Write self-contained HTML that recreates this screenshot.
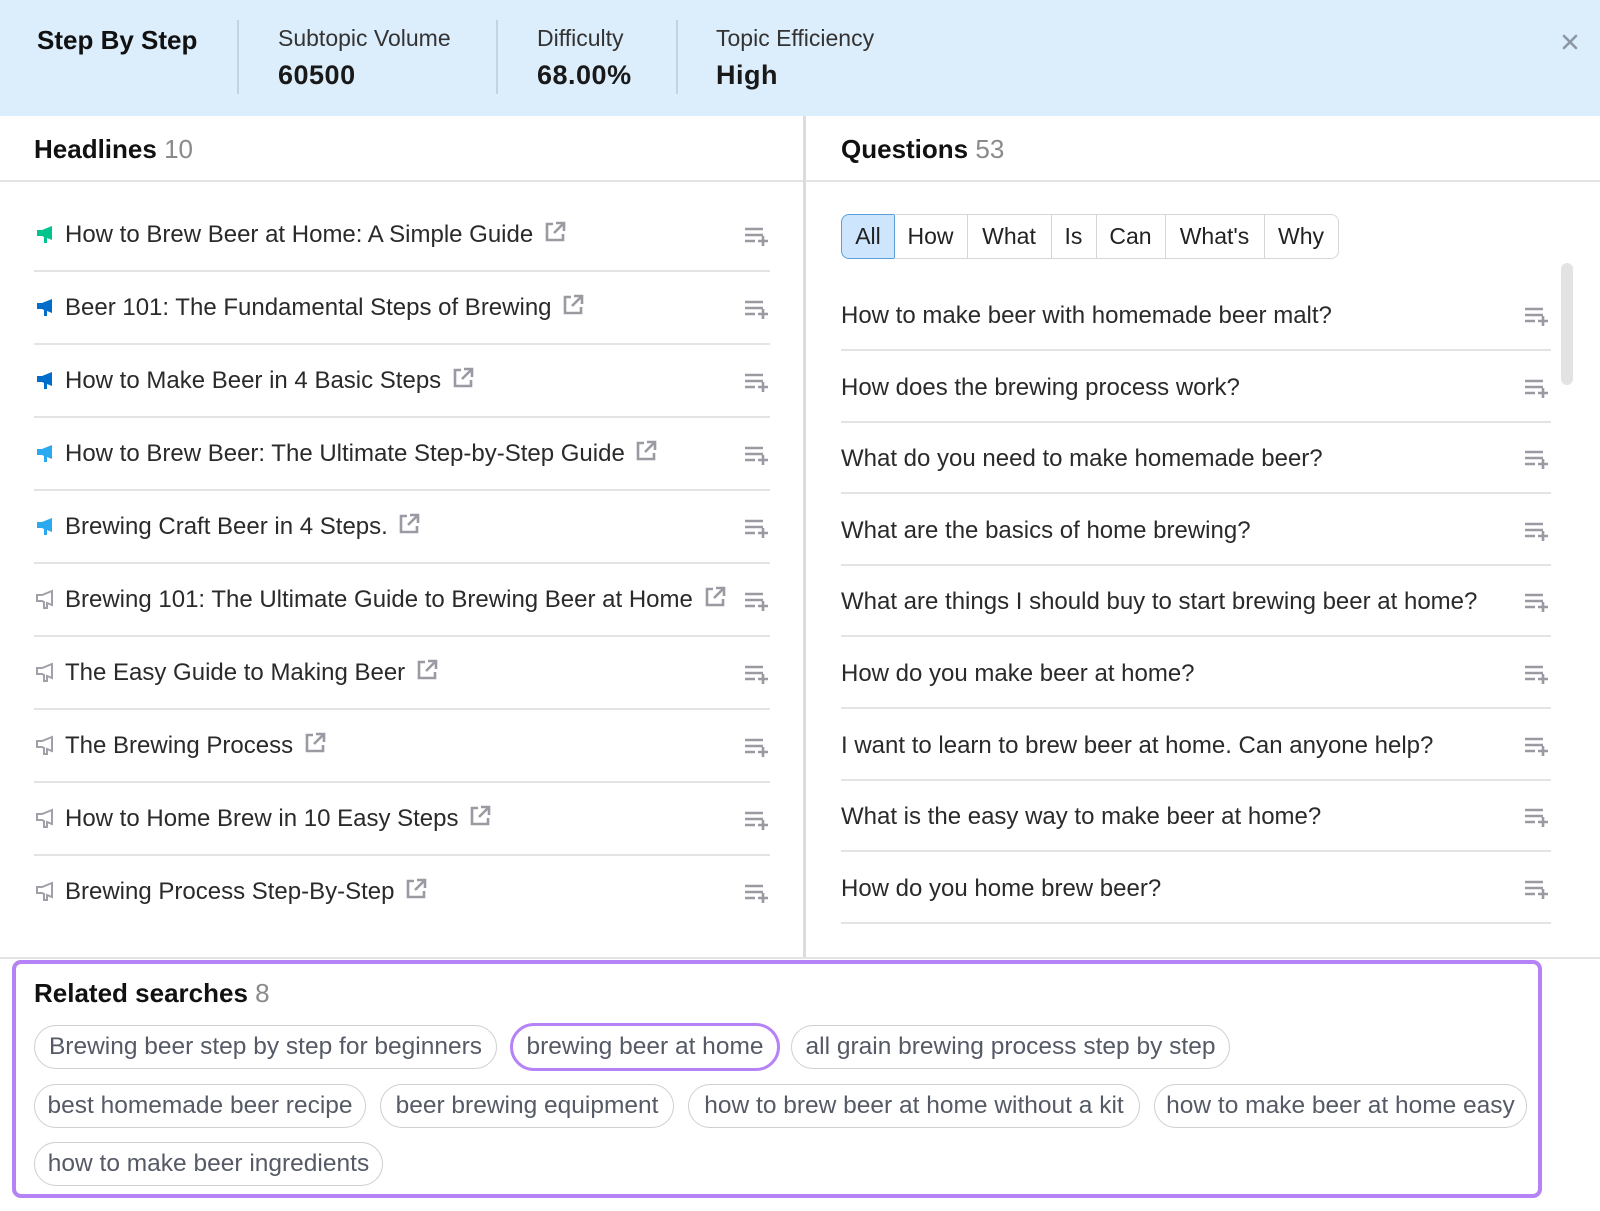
<!DOCTYPE html>
<html><head><meta charset="utf-8"><style>
*{box-sizing:border-box;margin:0;padding:0}
body{width:1600px;height:1211px;background:#fff;font-family:"Liberation Sans",sans-serif;color:#222;position:relative;overflow:hidden}
.a{position:absolute;white-space:nowrap}
.hdr{position:absolute;left:0;top:0;width:1600px;height:116px;background:#dcedfc}
.vd{position:absolute;width:2px;background:#c5d3e0;top:20px;height:74px}
.lbl{font-size:23px;color:#333}
.val{font-size:27px;font-weight:bold;color:#191919;letter-spacing:0.5px}
.ttl{font-size:26px;font-weight:bold;color:#111}
.ttl span{font-weight:normal;color:#8a8a8a}
.hl{position:absolute;left:34px;width:736px;height:73px;border-bottom:2px solid #e4e4e6}
.hl .t{position:absolute;left:31px;top:22px;font-size:24px;color:#2a2a2a;white-space:nowrap}
.hl .mg{position:absolute;left:0;top:24px}
.hl .ad{position:absolute;right:0;top:27px}
.q{position:absolute;left:841px;width:710px;height:71.6px;border-bottom:2px solid #e4e4e6}
.q .t{position:absolute;left:0;top:23px;font-size:24px;color:#2a2a2a;white-space:nowrap}
.q .ad{position:absolute;right:1px;top:27px}
.tab{position:absolute;top:214px;height:45px;border:1.5px solid #d6d6d9;font-size:23px;color:#222;display:flex;align-items:center;justify-content:center}
.chip{position:absolute;height:44px;border:1.5px solid #cfcfd3;border-radius:22px;font-size:24.5px;color:#555a66;display:flex;align-items:center;justify-content:center;white-space:nowrap}
.ex{vertical-align:-1px;margin-left:4px}
</style></head><body>
<div class="hdr"></div>
<div class="a ttl" style="left:37px;top:25px">Step By Step</div>
<div class="vd" style="left:237px"></div>
<div class="vd" style="left:496px"></div>
<div class="vd" style="left:676px"></div>
<div class="a lbl" style="left:278px;top:25px">Subtopic Volume</div>
<div class="a val" style="left:278px;top:60px">60500</div>
<div class="a lbl" style="left:537px;top:25px">Difficulty</div>
<div class="a val" style="left:537px;top:60px">68.00%</div>
<div class="a lbl" style="left:716px;top:25px">Topic Efficiency</div>
<div class="a val" style="left:716px;top:60px">High</div>
<svg class="a" style="left:1562px;top:34px" width="16" height="16" viewBox="0 0 16 16"><path d="M2 2L14 14M14 2L2 14" stroke="#8d96a3" stroke-width="2.6" stroke-linecap="round"/></svg>

<div class="a" style="left:0;top:180px;width:1600px;height:2px;background:#e4e4e6"></div>
<div class="a" style="left:803px;top:116px;width:3px;height:842px;background:#dcdcdf"></div>
<div class="a" style="left:0;top:957px;width:1600px;height:2px;background:#e4e4e6"></div>

<div class="a ttl" style="left:34px;top:134px">Headlines <span>10</span></div>
<div class="a ttl" style="left:841px;top:134px">Questions <span>53</span></div>

<svg width="0" height="0" style="position:absolute"><defs>
<symbol id="mg" viewBox="0 0 20 22"><path d="M2 3 L12 7 H17 V13 H12 L10 14 V20 H7 V15 L2 17 Z"/></symbol>
<symbol id="ad" viewBox="0 0 26 20"><path d="M1 3H19M1 9H19M1 15H11M19 10V20M14 15H24" stroke="#9a9aa3" stroke-width="2.6" fill="none"/></symbol>
<symbol id="ex" viewBox="0 0 22 22"><path d="M9 3H3V19H19V13" stroke="#9a9aa3" stroke-width="2.6" fill="none"/><path d="M10 12L19 3M12 2H20V10" stroke="#9a9aa3" stroke-width="2.6" fill="none"/></symbol>
</defs></svg>

<div class="hl" style="top:199px"><svg class="mg" width="20" height="22" style="transform:scaleX(-1)" fill="#00c48c"><use href="#mg"/></svg><span class="t">How to Brew Beer at Home: A Simple Guide <svg class="ex" width="22" height="22"><use href="#ex"/></svg></span><svg class="ad" width="26" height="20"><use href="#ad"/></svg></div>
<div class="hl" style="top:272px"><svg class="mg" width="20" height="22" style="transform:scaleX(-1)" fill="#006dca"><use href="#mg"/></svg><span class="t">Beer 101: The Fundamental Steps of Brewing <svg class="ex" width="22" height="22"><use href="#ex"/></svg></span><svg class="ad" width="26" height="20"><use href="#ad"/></svg></div>
<div class="hl" style="top:345px"><svg class="mg" width="20" height="22" style="transform:scaleX(-1)" fill="#006dca"><use href="#mg"/></svg><span class="t">How to Make Beer in 4 Basic Steps <svg class="ex" width="22" height="22"><use href="#ex"/></svg></span><svg class="ad" width="26" height="20"><use href="#ad"/></svg></div>
<div class="hl" style="top:418px"><svg class="mg" width="20" height="22" style="transform:scaleX(-1)" fill="#2aa8f0"><use href="#mg"/></svg><span class="t">How to Brew Beer: The Ultimate Step-by-Step Guide <svg class="ex" width="22" height="22"><use href="#ex"/></svg></span><svg class="ad" width="26" height="20"><use href="#ad"/></svg></div>
<div class="hl" style="top:491px"><svg class="mg" width="20" height="22" style="transform:scaleX(-1)" fill="#2aa8f0"><use href="#mg"/></svg><span class="t">Brewing Craft Beer in 4 Steps. <svg class="ex" width="22" height="22"><use href="#ex"/></svg></span><svg class="ad" width="26" height="20"><use href="#ad"/></svg></div>
<div class="hl" style="top:564px"><svg class="mg" width="20" height="22" style="transform:scaleX(-1)" fill="none" stroke="#a0a0a8" stroke-width="2"><use href="#mg"/></svg><span class="t">Brewing 101: The Ultimate Guide to Brewing Beer at Home <svg class="ex" width="22" height="22"><use href="#ex"/></svg></span><svg class="ad" width="26" height="20"><use href="#ad"/></svg></div>
<div class="hl" style="top:637px"><svg class="mg" width="20" height="22" style="transform:scaleX(-1)" fill="none" stroke="#a0a0a8" stroke-width="2"><use href="#mg"/></svg><span class="t">The Easy Guide to Making Beer <svg class="ex" width="22" height="22"><use href="#ex"/></svg></span><svg class="ad" width="26" height="20"><use href="#ad"/></svg></div>
<div class="hl" style="top:710px"><svg class="mg" width="20" height="22" style="transform:scaleX(-1)" fill="none" stroke="#a0a0a8" stroke-width="2"><use href="#mg"/></svg><span class="t">The Brewing Process <svg class="ex" width="22" height="22"><use href="#ex"/></svg></span><svg class="ad" width="26" height="20"><use href="#ad"/></svg></div>
<div class="hl" style="top:783px"><svg class="mg" width="20" height="22" style="transform:scaleX(-1)" fill="none" stroke="#a0a0a8" stroke-width="2"><use href="#mg"/></svg><span class="t">How to Home Brew in 10 Easy Steps <svg class="ex" width="22" height="22"><use href="#ex"/></svg></span><svg class="ad" width="26" height="20"><use href="#ad"/></svg></div>
<div class="hl" style="top:856px;border-bottom:none"><svg class="mg" width="20" height="22" style="transform:scaleX(-1)" fill="none" stroke="#a0a0a8" stroke-width="2"><use href="#mg"/></svg><span class="t">Brewing Process Step-By-Step <svg class="ex" width="22" height="22"><use href="#ex"/></svg></span><svg class="ad" width="26" height="20"><use href="#ad"/></svg></div>

<div class="tab" style="left:841px;width:54px;background:#cde6fd;border-color:#5a9fd9;border-radius:8px 0 0 8px">All</div>
<div class="tab" style="left:894px;width:74px;border-left:none">How</div>
<div class="tab" style="left:967px;width:85px;border-left:none">What</div>
<div class="tab" style="left:1051px;width:46px;border-left:none">Is</div>
<div class="tab" style="left:1096px;width:70px;border-left:none">Can</div>
<div class="tab" style="left:1165px;width:100px;border-left:none">What's</div>
<div class="tab" style="left:1264px;width:75px;border-left:none;border-radius:0 8px 8px 0">Why</div>

<div class="a" style="left:1561px;top:263px;width:12px;height:122px;border-radius:6px;background:#e3e3e6"></div>

<div class="q" style="top:279px"><span class="t">How to make beer with homemade beer malt?</span><svg class="ad" width="26" height="20"><use href="#ad"/></svg></div>
<div class="q" style="top:351px"><span class="t">How does the brewing process work?</span><svg class="ad" width="26" height="20"><use href="#ad"/></svg></div>
<div class="q" style="top:422px"><span class="t">What do you need to make homemade beer?</span><svg class="ad" width="26" height="20"><use href="#ad"/></svg></div>
<div class="q" style="top:494px"><span class="t">What are the basics of home brewing?</span><svg class="ad" width="26" height="20"><use href="#ad"/></svg></div>
<div class="q" style="top:565px"><span class="t">What are things I should buy to start brewing beer at home?</span><svg class="ad" width="26" height="20"><use href="#ad"/></svg></div>
<div class="q" style="top:637px"><span class="t">How do you make beer at home?</span><svg class="ad" width="26" height="20"><use href="#ad"/></svg></div>
<div class="q" style="top:709px"><span class="t">I want to learn to brew beer at home. Can anyone help?</span><svg class="ad" width="26" height="20"><use href="#ad"/></svg></div>
<div class="q" style="top:780px"><span class="t">What is the easy way to make beer at home?</span><svg class="ad" width="26" height="20"><use href="#ad"/></svg></div>
<div class="q" style="top:852px"><span class="t">How do you home brew beer?</span><svg class="ad" width="26" height="20"><use href="#ad"/></svg></div>

<div class="a" style="left:12px;top:960px;width:1530px;height:238px;border:4px solid #b583f5;border-radius:9px"></div>
<div class="a ttl" style="left:34px;top:978px">Related searches <span>8</span></div>
<div class="chip" style="left:34px;top:1025px;width:463px">Brewing beer step by step for beginners</div>
<div class="chip" style="left:510px;top:1023px;width:270px;height:48px;border:3.5px solid #b583f5;border-radius:24px">brewing beer at home</div>
<div class="chip" style="left:791px;top:1025px;width:439px">all grain brewing process step by step</div>
<div class="chip" style="left:34px;top:1084px;width:332px">best homemade beer recipe</div>
<div class="chip" style="left:380px;top:1084px;width:294px">beer brewing equipment</div>
<div class="chip" style="left:688px;top:1084px;width:452px">how to brew beer at home without a kit</div>
<div class="chip" style="left:1154px;top:1084px;width:373px">how to make beer at home easy</div>
<div class="chip" style="left:34px;top:1142px;width:349px">how to make beer ingredients</div>
</body></html>
